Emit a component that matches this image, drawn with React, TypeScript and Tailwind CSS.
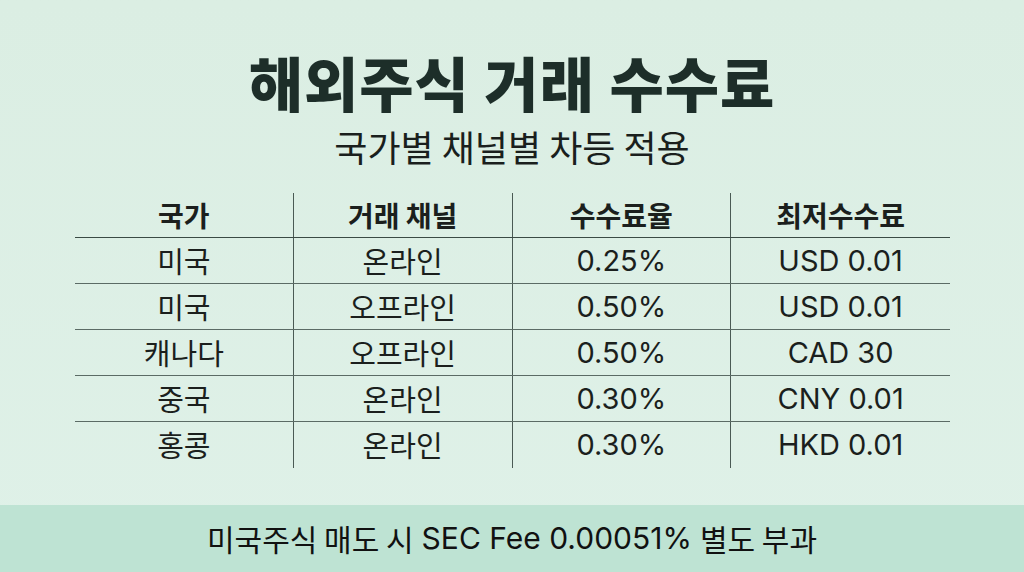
import React from "react";

const rows = [
  ["미국", "온라인", "0.25%", "USD 0.01"],
  ["미국", "오프라인", "0.50%", "USD 0.01"],
  ["캐나다", "오프라인", "0.50%", "CAD 30"],
  ["중국", "온라인", "0.30%", "CNY 0.01"],
  ["홍콩", "온라인", "0.30%", "HKD 0.01"],
];

const headers = ["국가", "거래 채널", "수수료율", "최저수수료"];

const App = () => {
  return (
    <div
      className="w-[1024px] h-[572px] flex flex-col bg-gradient-to-b from-[#dbeee3] to-[#dff1e8] text-[#1b1f1d] overflow-hidden"
      style={{ fontFamily: '"Noto Sans CJK KR", "Noto Sans", sans-serif' }}
    >
      <div className="flex-1 flex flex-col items-center">
        <h1 className="mt-[46px] text-[59px] leading-[72px] font-black text-[#1d2e29] tracking-[1px]">
          해외주식 거래 수수료
        </h1>
        <p className="mt-[6px] text-[36px] leading-[44px] font-normal text-[#1a1f1d]">
          국가별 채널별 차등 적용
        </p>

        <div className="mt-[25px] w-[875px] ml-[1px]">
          <div className="grid grid-cols-4 border-b border-[#3a4a44] h-[45px]">
            {headers.map((h, i) => (
              <div
                key={h}
                className={`flex items-center justify-center text-[28px] font-bold ${
                  i < 3 ? "border-r border-[#4a5a54]" : ""
                }`}
              >
                {h}
              </div>
            ))}
          </div>
          {rows.map((r, ri) => (
            <div
              key={ri}
              className={`grid grid-cols-4 h-[46px] ${
                ri < rows.length - 1 ? "border-b border-[#5b6b65]" : ""
              }`}
            >
              {r.map((c, i) => (
                <div
                  key={i}
                  className={`flex items-center justify-center text-[29px] ${
                    i < 3 ? "border-r border-[#4a5a54]" : ""
                  }`}
                  style={
                    i >= 2
                      ? { fontFamily: 'Inter, "Noto Sans CJK KR", sans-serif' }
                      : undefined
                  }
                >
                  {c}
                </div>
              ))}
            </div>
          ))}
        </div>
      </div>
      <div className="h-[67px] bg-[#bee3d3] flex items-center justify-center text-[30px] text-[#111]">
        미국주식 매도 시{" "}
        <span className="ml-[8px]" style={{ fontFamily: 'Inter, "Noto Sans CJK KR", sans-serif' }}>
          SEC Fee 0.00051%
        </span>
        <span className="ml-[8px]">별도 부과</span>
      </div>
    </div>
  );
};

export default App;
